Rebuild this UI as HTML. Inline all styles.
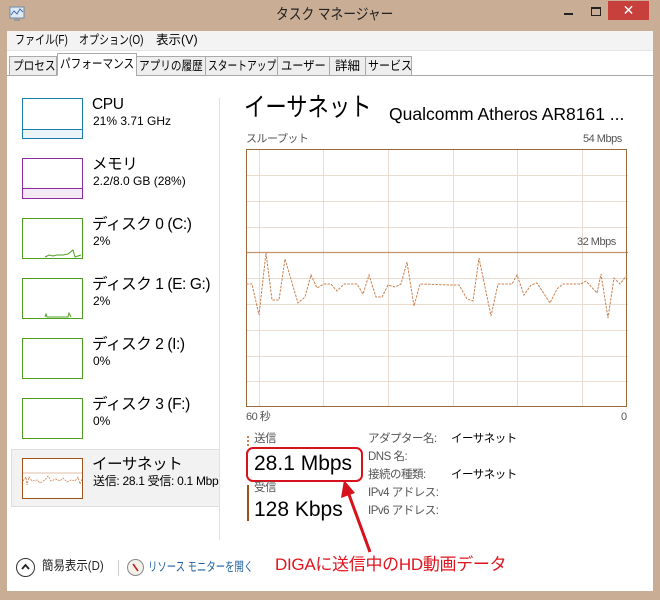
<!DOCTYPE html>
<html><head><meta charset="utf-8"><style>
*{margin:0;padding:0;box-sizing:border-box}
body{width:660px;height:600px;background:#c9ae95;position:relative;overflow:hidden;font-family:"Liberation Sans","Noto Sans CJK JP",sans-serif;color:#000}
.a{position:absolute;white-space:nowrap;line-height:1.15}
.s{display:inline-block;transform-origin:left center}
.th{position:absolute;left:22px;width:61px;height:41px;background:#fff}
.t1{position:absolute;left:92px;font-size:15.5px;line-height:1;white-space:nowrap;letter-spacing:-0.4px}
.t2{position:absolute;left:93px;font-size:12px;line-height:1;white-space:nowrap}
.tab{position:absolute;top:56px;height:20px;border:1px solid #aaa;background:#eee;font-size:12.5px;line-height:18px;white-space:nowrap;overflow:hidden;padding-left:3px}
.lbl{font-size:11.5px;color:#555;letter-spacing:-0.5px}
</style></head><body>
<svg class="a" style="left:9px;top:6px" width="18" height="16"><rect x="1" y="1" width="14" height="11" fill="#dfe9f3" stroke="#6a8aa8"/><polyline points="2,9 5,5 8,8 11,3 14,6" fill="none" stroke="#3a70b0"/><rect x="5" y="12" width="6" height="3" fill="#999"/></svg>
<div class="a" style="left:276px;top:6px;font-size:15px;color:#222"><span class="s" style="transform:scaleX(.85)">タスク マネージャー</span></div>
<div class="a" style="left:564px;top:13px;width:9px;height:2px;background:#222"></div>
<div class="a" style="left:591px;top:7px;width:10px;height:9px;border:1px solid #222;border-top-width:2px"></div>
<div class="a" style="left:608px;top:1px;width:41px;height:19px;background:#c7403c;color:#fff;font-size:14px;text-align:center;line-height:19px">✕</div>
<div class="a" style="left:7px;top:31px;width:646px;height:560px;background:#fff"></div>
<div class="a" style="left:7px;top:31px;width:646px;height:20px;background:#f3f3f3;border-bottom:1px solid #e4e4e4"></div>
<div class="a" style="left:15px;top:33px;font-size:12.5px"><span class="s" style="transform:scaleX(.8)">ファイル(F)</span></div>
<div class="a" style="left:79px;top:33px;font-size:12.5px"><span class="s" style="transform:scaleX(.8)">オプション(O)</span></div>
<div class="a" style="left:156px;top:33px;font-size:12.5px"><span class="s" style="transform:scaleX(1)">表示(V)</span></div>
<div class="a" style="left:7px;top:75px;width:646px;height:1px;background:#aaa"></div>
<div class="tab" style="left:9px;width:48px"><span class="s" style="transform:scaleX(.85)">プロセス</span></div>
<div class="tab" style="left:57px;top:53px;height:23px;width:80px;background:#fff;border-bottom-color:#fff;line-height:20px;padding-left:2px"><span class="s" style="transform:scaleX(.85)">パフォーマンス</span></div>
<div class="tab" style="left:136px;width:70px;padding-left:2px"><span class="s" style="transform:scaleX(.85)">アプリの履歴</span></div>
<div class="tab" style="left:205px;width:73px;padding-left:2px"><span class="s" style="transform:scaleX(.78)">スタートアップ</span></div>
<div class="tab" style="left:277px;width:53px;padding-left:3px"><span class="s" style="transform:scaleX(.9)">ユーザー</span></div>
<div class="tab" style="left:329px;width:37px;padding-left:5px"><span class="s" style="transform:scaleX(1)">詳細</span></div>
<div class="tab" style="left:365px;width:47px;padding-left:2px"><span class="s" style="transform:scaleX(.88)">サービス</span></div>
<div class="a" style="left:11px;top:449px;width:209px;height:58px;background:#f2f2f2;border:1px solid #dedede"></div>
<div class="a" style="left:219px;top:98px;width:1px;height:442px;background:#e0e0e0"></div>
<div class="th" style="top:98px;border:1px solid #1a7ea8"><div style="position:absolute;left:0;right:0;bottom:0;height:9px;background:#eaf4f8;border-top:1px solid #1a7ea8"></div></div>
<div class="t1" style="top:97px">CPU</div><div class="t2" style="top:115px">21% 3.71 GHz</div>
<div class="th" style="top:158px;border:1px solid #8d2aa0"><div style="position:absolute;left:0;right:0;bottom:0;height:10px;background:#f4eaf6;border-top:1px solid #8d2aa0"></div></div>
<div class="t1" style="top:157px">メモリ</div><div class="t2" style="top:175px">2.2/8.0 GB (28%)</div>
<div class="th" style="top:218px;border:1px solid #4fa020"><svg style="position:absolute;left:0;top:0" width="59" height="39"><polyline points="22,38 26,36 30,37 34,36 40,36 45,35 50,31 52,38 58,36" fill="none" stroke="#4fa020"/></svg></div>
<div class="t1" style="top:217px">ディスク 0 (C:)</div><div class="t2" style="top:235px">2%</div>
<div class="th" style="top:278px;border:1px solid #4fa020"><svg style="position:absolute;left:0;top:0" width="59" height="39"><polyline points="22,38 23,35 24,38 45,38 46,34 48,38" fill="none" stroke="#4fa020"/></svg></div>
<div class="t1" style="top:277px">ディスク 1 (E: G:)</div><div class="t2" style="top:295px">2%</div>
<div class="th" style="top:338px;border:1px solid #4fa020"></div>
<div class="t1" style="top:337px">ディスク 2 (I:)</div><div class="t2" style="top:355px">0%</div>
<div class="th" style="top:398px;border:1px solid #4fa020"></div>
<div class="t1" style="top:397px">ディスク 3 (F:)</div><div class="t2" style="top:415px">0%</div>
<div class="th" style="top:458px;border:1px solid #a0521a"><svg style="position:absolute;left:0;top:0" width="59" height="39"><line x1="0" y1="14" x2="59" y2="14" stroke="#c08050" stroke-width=".6"/><polyline points="0,22 3,18 4,26 6,18 9,22 14,21 17,24 22,21 25,17 28,22 33,20 37,22 40,19 44,23 48,21 52,22 55,18 57,25 59,20" fill="none" stroke="#d08050" stroke-width=".8" stroke-dasharray="2,1"/></svg></div>
<div class="t1" style="top:457px">イーサネット</div><div class="t2" style="top:475px;width:126px;overflow:hidden;letter-spacing:-0.3px">送信: 28.1 受信: 0.1 Mbps</div>
<div class="a" style="left:244px;top:93px;font-size:26px;transform:scaleX(0.82);transform-origin:left">イーサネット</div>
<div class="a" style="left:389px;top:104px;font-size:17.5px">Qualcomm Atheros AR8161 ...</div>
<div class="a lbl" style="left:246px;top:133px;font-size:11px">スループット</div>
<div class="a lbl" style="left:583px;top:133px;font-size:11px">54 Mbps</div>
<svg class="a" style="left:246px;top:149px" width="382" height="259">
<g stroke="#ebdcd0" stroke-width="1">
<line x1="13.5" y1="0" x2="13.5" y2="258"/><line x1="77.5" y1="0" x2="77.5" y2="258"/><line x1="142.5" y1="0" x2="142.5" y2="258"/><line x1="207.5" y1="0" x2="207.5" y2="258"/><line x1="271.5" y1="0" x2="271.5" y2="258"/><line x1="336.5" y1="0" x2="336.5" y2="258"/>
<line x1="0" y1="26.5" x2="382" y2="26.5"/><line x1="0" y1="52.5" x2="382" y2="52.5"/><line x1="0" y1="78.5" x2="382" y2="78.5"/><line x1="0" y1="129.5" x2="382" y2="129.5"/><line x1="0" y1="155.5" x2="382" y2="155.5"/><line x1="0" y1="181.5" x2="382" y2="181.5"/><line x1="0" y1="207.5" x2="382" y2="207.5"/><line x1="0" y1="232.5" x2="382" y2="232.5"/>
</g>
<line x1="0" y1="103.5" x2="382" y2="103.5" stroke="#c8946a" stroke-width="1.2"/>
<rect x="0.5" y="0.5" width="380" height="257" fill="none" stroke="#9b6a3a"/>
<polyline transform="translate(-246,-149)" fill="none" stroke="#c8804f" stroke-width="1" stroke-dasharray="2.5,1.2" points="246,284 252,284 259,315 266,253 272,300 279,300 285,259 298,303 305,297 311,275 317,288 324,284 331,284 337,291 344,284 357,284 363,294 369,275 376,297 382,297 388,285 395,287 401,284 407,262 414,306 420,284 450,285 459,285 467,299 473,301 479,258 491,316 498,284 512,284 517,275 524,295 531,285 537,283 550,303 557,289 563,284 581,284 586,281 597,293 601,274 608,318 614,278 620,284 627,275"/>
</svg>
<div class="a lbl" style="left:577px;top:236px;font-size:11px">32 Mbps</div>
<div class="a lbl" style="left:246px;top:411px;font-size:11px">60 秒</div>
<div class="a lbl" style="left:621px;top:411px;font-size:11px">0</div>
<div class="a" style="left:247px;top:436px;width:2px;height:10px;border-left:2px dotted #c8804f"></div>
<div class="a lbl" style="left:254px;top:433px">送信</div>
<div class="a" style="left:254px;top:452px;font-size:21px">28.1 Mbps</div>
<div class="a" style="left:246px;top:447px;width:117px;height:35px;border:2px solid #d8121c;border-radius:7px"></div>
<div class="a" style="left:247px;top:485px;width:2px;height:36px;background:#a0521a"></div>
<div class="a lbl" style="left:254px;top:482px">受信</div>
<div class="a" style="left:254px;top:498px;font-size:21px">128 Kbps</div>
<div class="a lbl" style="left:368px;top:433px">アダプター名:</div><div class="a" style="left:451px;top:433px;font-size:11.5px;letter-spacing:-0.5px">イーサネット</div>
<div class="a lbl" style="left:368px;top:451px">DNS 名:</div>
<div class="a lbl" style="left:368px;top:469px">接続の種類:</div><div class="a" style="left:451px;top:469px;font-size:11.5px;letter-spacing:-0.5px">イーサネット</div>
<div class="a lbl" style="left:368px;top:487px">IPv4 アドレス:</div>
<div class="a lbl" style="left:368px;top:505px">IPv6 アドレス:</div>
<svg class="a" style="left:330px;top:470px" width="60" height="90"><line x1="40" y1="82" x2="18" y2="22" stroke="#d8121c" stroke-width="3"/><polygon points="14,10 11,28 25,23" fill="#d8121c"/></svg>
<div class="a" style="left:16px;top:558px;width:19px;height:19px;border:1.5px solid #333;border-radius:50%"><svg style="position:absolute;left:4px;top:4px" width="9" height="8"><polyline points="1,6 4.5,2 8,6" fill="none" stroke="#222" stroke-width="1.8"/></svg></div>
<div class="a" style="left:42px;top:559px;font-size:13px;color:#222"><span class="s" style="transform:scaleX(.88)">簡易表示(D)</span></div>
<div class="a" style="left:118px;top:560px;width:1px;height:16px;background:#ccc"></div>
<div class="a" style="left:127px;top:559px;width:17px;height:17px;border:1.5px solid #888;border-radius:50%;background:#f4f0ea"><svg style="position:absolute;left:1px;top:1px" width="13" height="13"><line x1="4" y1="3" x2="9" y2="10" stroke="#c02020" stroke-width="1.6"/></svg></div>
<div class="a" style="left:148px;top:560px;font-size:12.5px;color:#1e5fa0"><span class="s" style="transform:scaleX(.75)">リソース モニターを開く</span></div>
<div class="a" style="left:275px;top:555px;font-size:17px;color:#e0141e;letter-spacing:-0.3px">DIGAに送信中のHD動画データ</div>
</body></html>
